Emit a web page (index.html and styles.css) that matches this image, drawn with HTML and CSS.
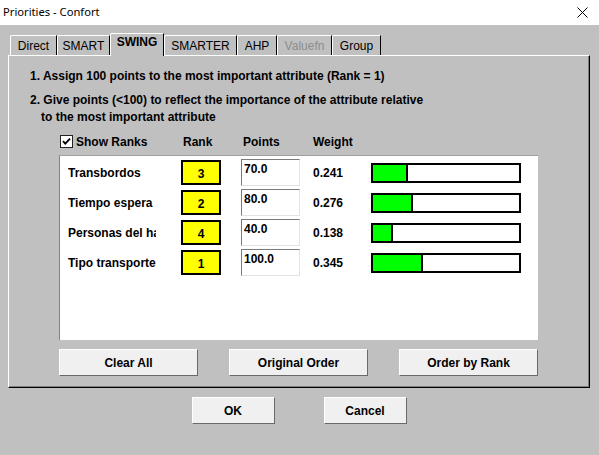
FILE: index.html
```html
<!DOCTYPE html>
<html>
<head>
<meta charset="utf-8">
<link rel="stylesheet" href="styles.css">
</head>
<body>
<div class="window">
  <div class="titlebar">
    <span class="title">Priorities - Confort</span>
    <svg class="close" width="11" height="11" viewBox="0 0 11 11"><path d="M0.5 0.5 L10.5 10.5 M10.5 0.5 L0.5 10.5" stroke="#000" stroke-width="1" fill="none"/></svg>
  </div>
  <div class="tabs">
    <div class="tab">Direct</div>
    <div class="tab">SMART</div>
    <div class="tab selected">SWING</div>
    <div class="tab">SMARTER</div>
    <div class="tab">AHP</div>
    <div class="tab disabled">Valuefn</div>
    <div class="tab">Group</div>
  </div>
  <div class="panel">
    <div class="instr first">1. Assign 100 points to the most important attribute (Rank = 1)</div>
    <div class="instr second">2. Give points (&lt;100) to reflect the importance of the attribute relative</div>
    <div class="instr indent">to the most important attribute</div>
    <div class="header">
      <div class="hdr-check">
        <span class="checkbox"><svg width="11" height="11" viewBox="0 0 11 11"><path d="M2 5.2 L4.3 7.6 L9 2.6" stroke="#000" stroke-width="1.8" fill="none"/></svg></span>
        <span>Show Ranks</span>
      </div>
      <div class="hdr-rank">Rank</div>
      <div class="hdr-points">Points</div>
      <div class="hdr-weight">Weight</div>
    </div>
    <div class="list">
      <div class="row">
        <div class="label">Transbordos</div>
        <div class="rank">3</div>
        <div class="points">70.0</div>
        <div class="weight">0.241</div>
        <div class="bar"><div class="fill" style="width:35px"></div></div>
      </div>
      <div class="row">
        <div class="label">Tiempo espera</div>
        <div class="rank">2</div>
        <div class="points">80.0</div>
        <div class="weight">0.276</div>
        <div class="bar"><div class="fill" style="width:40px"></div></div>
      </div>
      <div class="row">
        <div class="label">Personas del hall</div>
        <div class="rank">4</div>
        <div class="points">40.0</div>
        <div class="weight">0.138</div>
        <div class="bar"><div class="fill" style="width:20px"></div></div>
      </div>
      <div class="row">
        <div class="label">Tipo transporte</div>
        <div class="rank">1</div>
        <div class="points">100.0</div>
        <div class="weight">0.345</div>
        <div class="bar"><div class="fill" style="width:50px"></div></div>
      </div>
    </div>
    <div class="actions">
      <button class="btn wide">Clear All</button>
      <button class="btn wide">Original Order</button>
      <button class="btn wide">Order by Rank</button>
    </div>
  </div>
  <div class="footer">
    <button class="btn small">OK</button>
    <button class="btn small">Cancel</button>
  </div>
</div>
</body>
</html>
```
FILE: styles.css
```css
html, body {
  margin: 0;
  padding: 0;
}
body {
  width: 599px;
  height: 455px;
  overflow: hidden;
  background: #c0c0c0;
  font-family: "Liberation Sans", Arial, sans-serif;
  font-size: 12px;
  line-height: 14px;
  color: #000;
}
.window {
  display: flex;
  flex-direction: column;
  height: 455px;
}
.titlebar {
  height: 25px;
  background: #fff;
  display: flex;
  align-items: center;
  padding: 0 11px 0 3px;
}
.title {
  font-family: "Noto Sans", sans-serif;
  font-size: 11.2px;
  color: #000;
  margin-top: -1px;
}
.close {
  margin-left: auto;
  display: block;
  margin-top: -1px;
}
.tabs {
  height: 30px;
  display: flex;
  align-items: flex-end;
  padding-left: 10px;
  box-sizing: border-box;
  position: relative;
  z-index: 1;
}
.tab {
  height: 20px;
  box-sizing: border-box;
  border-top: 1px solid #fff;
  border-left: 1px solid #fff;
  border-right: 1px solid #000;
  border-top-left-radius: 2px;
  padding-top: 3px;
  text-align: center;
  white-space: nowrap;
  overflow: hidden;
}
.tab:nth-child(1) { width: 47px; }
.tab:nth-child(2) { width: 53px; }
.tab:nth-child(3) { width: 54px; }
.tab:nth-child(4) { width: 73px; }
.tab:nth-child(5) { width: 40px; }
.tab:nth-child(6) { width: 55px; }
.tab:nth-child(7) { width: 49px; }
.tab.selected {
  height: 23px;
  margin-bottom: -1px;
  padding-top: 1px;
  font-weight: bold;
  background: #c0c0c0;
}
.tab.disabled {
  color: #8d8d8d;
}
.panel {
  margin-left: 8px;
  width: 582px;
  height: 333px;
  box-sizing: border-box;
  border-top: 1px solid #fff;
  border-left: 1px solid #fff;
  border-right: 1px solid #000;
  border-bottom: 1px solid #000;
  box-shadow: inset -1px -1px 0 #808080;
  padding-top: 13px;
  display: flex;
  flex-direction: column;
}
.instr {
  font-weight: bold;
  padding-left: 21px;
  white-space: nowrap;
}
.instr.second {
  margin-top: 10px;
}
.instr.indent {
  margin-top: 3px;
  padding-left: 32px;
}
.header {
  display: flex;
  font-weight: bold;
  margin-top: 11px;
  padding-left: 51px;
}
.hdr-check {
  width: 123px;
  display: flex;
  align-items: flex-start;
}
.checkbox {
  width: 13px;
  height: 13px;
  box-sizing: border-box;
  background: #fff;
  border: 1px solid #222;
  display: flex;
  align-items: center;
  justify-content: center;
  margin-right: 3px;
}
.checkbox svg {
  display: block;
}
.hdr-rank { width: 60px; }
.hdr-points { width: 70px; }
.list {
  margin-top: 6px;
  margin-left: 50px;
  width: 479px;
  height: 185px;
  box-sizing: border-box;
  background: #fff;
  border-top: 1px solid #a0a0a0;
  border-left: 1px solid #808080;
  padding-top: 3px;
  padding-left: 8px;
}
.row {
  height: 30px;
  display: flex;
  align-items: flex-start;
  font-weight: bold;
}
.label {
  width: 88px;
  margin-top: 7px;
  white-space: nowrap;
  overflow: hidden;
}
.rank {
  width: 40px;
  height: 25px;
  box-sizing: border-box;
  margin-top: 1px;
  margin-left: 25px;
  border: 2px solid #000;
  background: #ffff00;
  text-align: center;
  padding-top: 5px;
}
.points {
  width: 59px;
  height: 27px;
  box-sizing: border-box;
  margin-left: 20px;
  border-top: 1px solid #7a7a7a;
  border-left: 1px solid #7a7a7a;
  border-right: 1px solid #e3e3e3;
  border-bottom: 1px solid #e3e3e3;
  padding: 2px 0 0 2px;
  background: #fff;
}
.weight {
  width: 58px;
  margin-left: 13px;
  margin-top: 7px;
}
.bar {
  width: 150px;
  height: 20px;
  box-sizing: border-box;
  margin-top: 4px;
  border: 2px solid #000;
  background: #fff;
}
.fill {
  height: 100%;
  box-sizing: border-box;
  background: #00ff00;
  border-right: 2px solid #000;
}
.actions {
  display: flex;
  gap: 31px;
  margin-top: 9px;
  margin-left: 50px;
}
.btn {
  font-family: "Liberation Sans", Arial, sans-serif;
  font-size: 12px;
  line-height: 14px;
  font-weight: bold;
  color: #000;
  height: 27px;
  box-sizing: border-box;
  background: #f0f0f0;
  border-top: 1px solid #fff;
  border-left: 1px solid #fff;
  border-right: 1px solid #696969;
  border-bottom: 1px solid #696969;
  padding: 0;
  margin: 0;
}
.btn.wide { width: 139px; }
.btn.small { width: 83px; }
.footer {
  display: flex;
  justify-content: center;
  gap: 49px;
  margin-top: 9px;
  padding-right: 1px;
}
```
